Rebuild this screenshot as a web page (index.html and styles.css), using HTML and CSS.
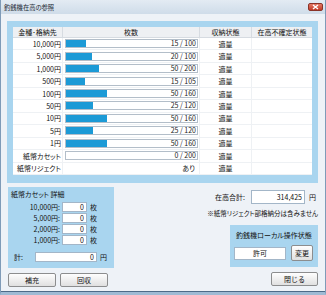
FILE: index.html
```html
<!DOCTYPE html>
<html lang="ja">
<head>
  <meta charset="UTF-8">
  <title>釣銭機在高の参照</title>
  <link rel="stylesheet" href="styles.css">
</head>
<body>
  <div class="window">
    <div class="titlebar">
      <span class="title">釣銭機在高の参照</span>
      <span class="close-btn">
        <svg width="9" height="6" viewBox="0 0 9 6"><path d="M2 1 L7 5 M7 1 L2 5" stroke="#fff" stroke-width="1.4"/></svg>
      </span>
    </div>

    <div class="content">
      <div class="stock-panel">
        <div class="stock-table" id="stock-table">
          <div class="th">金種･格納先</div>
          <div class="th">枚数</div>
          <div class="th">収納状態</div>
          <div class="th last">在高不確定状態</div>
        </div>
      </div>

      <div class="lower">
        <div class="left-col">
          <div class="cassette-panel">
            <div class="panel-title">紙幣カセット 詳細</div>
            <div class="cassette-rows">
              <div class="cassette-row"><span class="c-label">10,000円:</span><span class="field small">0</span><span class="unit">枚</span></div>
              <div class="cassette-row"><span class="c-label">5,000円:</span><span class="field small">0</span><span class="unit">枚</span></div>
              <div class="cassette-row"><span class="c-label">2,000円:</span><span class="field small">0</span><span class="unit">枚</span></div>
              <div class="cassette-row"><span class="c-label">1,000円:</span><span class="field small">0</span><span class="unit">枚</span></div>
            </div>
            <div class="sum-row"><span class="s-label">計:</span><span class="field wide">0</span><span class="unit">円</span></div>
          </div>
          <div class="btn-row">
            <button class="btn">補充</button>
            <button class="btn">回収</button>
          </div>
        </div>

        <div class="right-col">
          <div class="total-row">
            <span>在高合計:</span>
            <span class="field total">314,425</span>
            <span>円</span>
          </div>
          <div class="note">※紙幣リジェクト部格納分は含みません</div>
          <div class="local-panel">
            <div class="local-title">釣銭機ローカル操作状態</div>
            <div class="local-row">
              <span class="field state">許可</span>
              <button class="btn change">変更</button>
            </div>
          </div>
          <button class="btn close">閉じる</button>
        </div>
      </div>
    </div>
  </div>

  <script>
    var stock = [
      { name: '10,000円', count: 15, max: 100 },
      { name: '5,000円', count: 20, max: 100 },
      { name: '1,000円', count: 50, max: 200 },
      { name: '500円', count: 15, max: 105 },
      { name: '100円', count: 50, max: 160 },
      { name: '50円', count: 25, max: 120 },
      { name: '10円', count: 50, max: 160 },
      { name: '5円', count: 25, max: 120 },
      { name: '1円', count: 50, max: 160 },
      { name: '紙幣カセット', count: 0, max: 200 },
      { name: '紙幣リジェクト', text: 'あり' }
    ];

    function loadStock() {
      var table = document.getElementById('stock-table');
      stock.forEach(function (row) {
        var amount;
        if (row.text) {
          amount = '<div class="td amount plain">' + row.text + '</div>';
        } else {
          var pct = row.count / row.max * 100;
          amount = '<div class="td amount"><div class="bar">' +
            '<div class="bar-fill" style="width:' + pct + '%"></div>' +
            '<span class="bar-text">' + row.count + ' / ' + row.max + '</span></div></div>';
        }
        table.innerHTML +=
          '<div class="td name">' + row.name + '</div>' + amount +
          '<div class="td status">適量</div>' +
          '<div class="td last"></div>';
      });
    }

    loadStock();
  </script>
</body>
</html>
```

FILE: styles.css
```css
* {
  box-sizing: border-box;
}

body {
  margin: 0;
  font-family: "Noto Sans CJK JP", "Noto Sans", sans-serif;
  font-size: 7px;
  color: #111;
  font-feature-settings: "palt";
}

.window {
  width: 326px;
  height: 295px;
  background: #eef2f7;
  border-left: 1px solid #7f9bb8;
  border-right: 1px solid #7f9bb8;
  border-bottom: 3px solid #9fbad4;
  display: flex;
  flex-direction: column;
}

.titlebar {
  height: 14px;
  background: linear-gradient(#e3ebf3, #cfdce9);
  display: flex;
  align-items: center;
  padding: 0 2px 0 3px;
}

.title {
  font-size: 6.3px;
  color: #1e2a36;
}

.close-btn {
  margin-left: auto;
  width: 15px;
  height: 8px;
  border: 1px solid #8a3328;
  border-radius: 2px;
  background: linear-gradient(#e57a66, #c13b27);
  display: flex;
  align-items: center;
  justify-content: center;
}

.close-btn svg {
  display: block;
}

.content {
  flex: 1;
  padding: 7px 7px 0 6px;
  border-bottom: 1px solid #4d6a88;
}

/* stock table */

.stock-panel {
  background: #a9d5ef;
  padding: 6px 6px 8px 6px;
}

.stock-table {
  background: #fff;
  display: grid;
  grid-template-columns: 50px 137px 52px 1fr;
  grid-template-rows: 11px repeat(11, 1fr);
  height: 148px;
}

.th {
  background: #eef0f3;
  border-right: 1px solid #d6dbe1;
  border-bottom: 1px solid #d6dbe1;
  display: flex;
  align-items: center;
  justify-content: center;
}

.th.last,
.td.last {
  border-right: none;
}

.td {
  border-right: 1px solid #eef1f4;
  border-bottom: 1px solid #eef1f4;
  display: flex;
  align-items: center;
}

.td.name {
  justify-content: flex-end;
  padding-right: 1px;
}

.td.status {
  justify-content: center;
}

.td.amount {
  padding: 0 1px 0 2px;
}

.td.plain {
  justify-content: flex-end;
  padding-right: 4px;
}

.bar {
  position: relative;
  width: 100%;
  height: 9px;
  border: 1px solid #b3bec9;
  background: #fff;
}

.bar-fill {
  height: 100%;
  background: #1c9ad6;
}

.bar-text {
  position: absolute;
  right: 1px;
  top: 0;
  line-height: 7px;
  color: #222;
}

/* lower area */

.lower {
  display: flex;
  margin-top: 4px;
}

.left-col {
  width: 107px;
  padding-left: 1px;
}

.cassette-panel {
  background: #a9d5ef;
  height: 81px;
  padding: 2px 0 0 3px;
}

.panel-title {
  line-height: 11px;
}

.cassette-rows {
  margin-top: 2px;
  display: flex;
  flex-direction: column;
  gap: 1px;
}

.cassette-row,
.sum-row {
  display: flex;
  align-items: center;
  height: 10px;
}

.c-label {
  width: 49px;
  text-align: right;
  margin-right: 2px;
}

.field {
  background: #fff;
  border: 1px solid #a3b6c8;
  height: 10px;
  line-height: 8px;
  text-align: right;
  padding-right: 2px;
}

.field.small {
  width: 25px;
}

.unit {
  margin-left: 3px;
}

.sum-row {
  margin-top: 7px;
}

.s-label {
  width: 24px;
  padding-left: 3px;
}

.field.wide {
  width: 62px;
}

.btn {
  font-family: inherit;
  font-size: 7px;
  color: #111;
  padding: 0;
  border: 1px solid #8c8d8e;
  border-radius: 2px;
  background: linear-gradient(#fefefe, #e0e0e0);
  height: 14px;
}

.btn-row {
  display: flex;
  gap: 4px;
  margin-top: 5px;
}

.btn-row .btn {
  width: 48px;
}

.right-col {
  flex: 1;
  display: flex;
  flex-direction: column;
  align-items: flex-end;
}

.total-row {
  display: flex;
  align-items: center;
  gap: 4px;
  margin-top: 3px;
  padding-right: 2px;
}

.total-row span:first-child {
  margin-right: 2px;
}

.field.total {
  width: 54px;
  height: 14px;
  line-height: 12px;
}

.note {
  font-size: 6.5px;
  margin-top: 5px;
  line-height: 9px;
}

.local-panel {
  background: #a9d5ef;
  width: 88px;
  height: 42px;
  margin-top: 7px;
  padding: 6px 4px 0 4px;
}

.local-title {
  text-align: center;
  line-height: 9px;
}

.local-row {
  display: flex;
  align-items: center;
  margin-top: 5px;
  gap: 5px;
}

.field.state {
  width: 52px;
  height: 13px;
  line-height: 11px;
  text-align: center;
  padding: 0;
}

.btn.change {
  width: 22px;
  height: 16px;
}

.btn.close {
  width: 47px;
  margin-top: 5px;
}
```
